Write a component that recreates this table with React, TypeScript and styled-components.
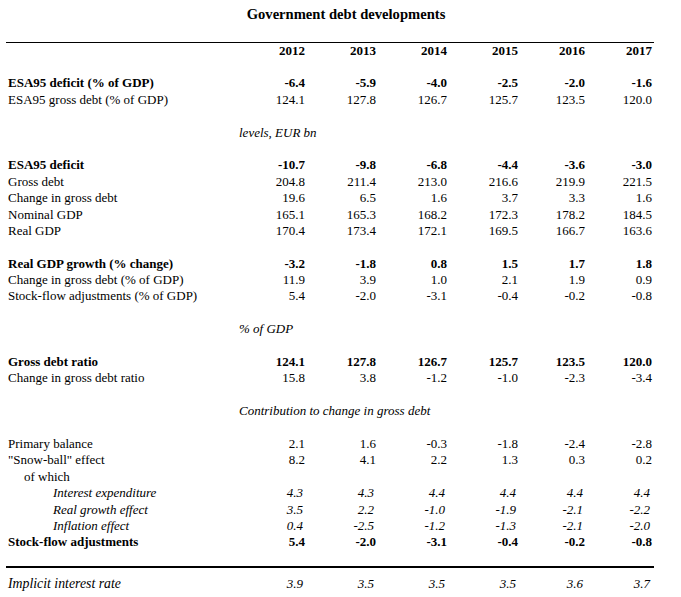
import React from "react";
import styled, { createGlobalStyle, css } from "styled-components";

const Global = createGlobalStyle`
  html, body { margin: 0; padding: 0; background: #ffffff; }
  body { font-family: "Liberation Serif", "Times New Roman", serif; color: #000; }
`;

const Page = styled.div`
  width: 681px;
  height: 597px;
  background: #fff;
  overflow: hidden;
`;

const Sheet = styled.div`
  margin-left: 6px;
  width: 648px;
  display: flex;
  flex-direction: column;
`;

const Title = styled.div`
  margin-top: 6px;
  height: 16px;
  line-height: 16px;
  font-size: 14.6px;
  font-weight: bold;
  text-align: center;
  padding-left: 32px;
`;

const Rule = styled.div<{ $thick?: boolean; $top: number }>`
  margin-top: ${(p) => p.$top}px;
  height: ${(p) => (p.$thick ? 2 : 1)}px;
  background: #000;
  width: 648px;
`;

type Variant = "normal" | "bold" | "italic";

const Row = styled.div<{ $variant?: Variant }>`
  display: grid;
  grid-template-columns: 242px 57px 71px 71px 71px 67px 67px;
  height: 16.4px;
  line-height: 16.4px;
  font-size: 13px;
  white-space: nowrap;
  ${(p) =>
    p.$variant === "bold" &&
    css`
      font-weight: bold;
    `}
  ${(p) =>
    p.$variant === "italic" &&
    css`
      font-style: italic;
    `}
`;

const Label = styled.div<{ $indent?: number; $size?: number }>`
  padding-left: ${(p) => 2 + (p.$indent ?? 0)}px;
  ${(p) =>
    p.$size &&
    css`
      font-size: ${p.$size}px;
    `}
`;

const Num = styled.div<{ $shift?: number }>`
  text-align: right;
  padding-right: ${(p) => p.$shift ?? 0}px;
`;

const Blank = styled.div`
  height: 16.4px;
`;

const Section = styled.div`
  height: 16.4px;
  line-height: 16.4px;
  font-size: 13px;
  font-style: italic;
  padding-left: 233px;
  white-space: nowrap;
`;

const HeaderRow = styled(Row)`
  font-weight: bold;
`;

const TopGap = styled.div`
  height: 16px;
`;

type RowData = {
  label: string;
  values?: string[];
  variant?: Variant;
  indent?: number;
};

type Item = RowData | "blank" | { section: string };

const items: Item[] = [
  { label: "ESA95 deficit (% of GDP)", values: ["-6.4", "-5.9", "-4.0", "-2.5", "-2.0", "-1.6"], variant: "bold" },
  { label: "ESA95 gross debt (% of GDP)", values: ["124.1", "127.8", "126.7", "125.7", "123.5", "120.0"] },
  "blank",
  { section: "levels, EUR bn" },
  "blank",
  { label: "ESA95 deficit", values: ["-10.7", "-9.8", "-6.8", "-4.4", "-3.6", "-3.0"], variant: "bold" },
  { label: "Gross debt", values: ["204.8", "211.4", "213.0", "216.6", "219.9", "221.5"] },
  { label: "Change in gross debt", values: ["19.6", "6.5", "1.6", "3.7", "3.3", "1.6"] },
  { label: "Nominal GDP", values: ["165.1", "165.3", "168.2", "172.3", "178.2", "184.5"] },
  { label: "Real GDP", values: ["170.4", "173.4", "172.1", "169.5", "166.7", "163.6"] },
  "blank",
  { label: "Real GDP growth (% change)", values: ["-3.2", "-1.8", "0.8", "1.5", "1.7", "1.8"], variant: "bold" },
  { label: "Change in gross debt (% of GDP)", values: ["11.9", "3.9", "1.0", "2.1", "1.9", "0.9"] },
  { label: "Stock-flow adjustments (% of GDP)", values: ["5.4", "-2.0", "-3.1", "-0.4", "-0.2", "-0.8"] },
  "blank",
  { section: "% of GDP" },
  "blank",
  { label: "Gross debt ratio", values: ["124.1", "127.8", "126.7", "125.7", "123.5", "120.0"], variant: "bold" },
  { label: "Change in gross debt ratio", values: ["15.8", "3.8", "-1.2", "-1.0", "-2.3", "-3.4"] },
  "blank",
  { section: "Contribution to change in gross debt" },
  "blank",
  { label: "Primary balance", values: ["2.1", "1.6", "-0.3", "-1.8", "-2.4", "-2.8"] },
  { label: "\"Snow-ball\" effect", values: ["8.2", "4.1", "2.2", "1.3", "0.3", "0.2"] },
  { label: "of which", indent: 16 },
  { label: "Interest expenditure", values: ["4.3", "4.3", "4.4", "4.4", "4.4", "4.4"], variant: "italic", indent: 45 },
  { label: "Real growth effect", values: ["3.5", "2.2", "-1.0", "-1.9", "-2.1", "-2.2"], variant: "italic", indent: 45 },
  { label: "Inflation effect", values: ["0.4", "-2.5", "-1.2", "-1.3", "-2.1", "-2.0"], variant: "italic", indent: 45 },
  { label: "Stock-flow adjustments", values: ["5.4", "-2.0", "-3.1", "-0.4", "-0.2", "-0.8"], variant: "bold" },
];

const years = ["2012", "2013", "2014", "2015", "2016", "2017"];

const DataRow: React.FC<{ row: RowData }> = ({ row }) => (
  <Row $variant={row.variant}>
    <Label $indent={row.indent}>{row.label}</Label>
    {(row.values ?? ["", "", "", "", "", ""]).map((v, i) => (
      <Num key={i} $shift={row.variant === "italic" ? 2 : 0}>
        {v}
      </Num>
    ))}
  </Row>
);

const BottomRow = styled(Row)`
  margin-top: 8px;
`;

export default function App() {
  return (
    <Page>
      <Global />
      <Sheet>
        <Title>Government debt developments</Title>
        <Rule $top={20} />
        <HeaderRow>
          <Label />
          {years.map((y) => (
            <Num key={y}>{y}</Num>
          ))}
        </HeaderRow>
        <TopGap />
        {items.map((it, i) => {
          if (it === "blank") return <Blank key={i} />;
          if ("section" in it) return <Section key={i}>{it.section}</Section>;
          return <DataRow key={i} row={it} />;
        })}
        <Rule $thick $top={15} />
        <BottomRow $variant="italic">
          <Label $size={13.8}>Implicit interest rate</Label>
          {["3.9", "3.5", "3.5", "3.5", "3.6", "3.7"].map((v, i) => (
            <Num key={i} $shift={2}>
              {v}
            </Num>
          ))}
        </BottomRow>
      </Sheet>
    </Page>
  );
}
